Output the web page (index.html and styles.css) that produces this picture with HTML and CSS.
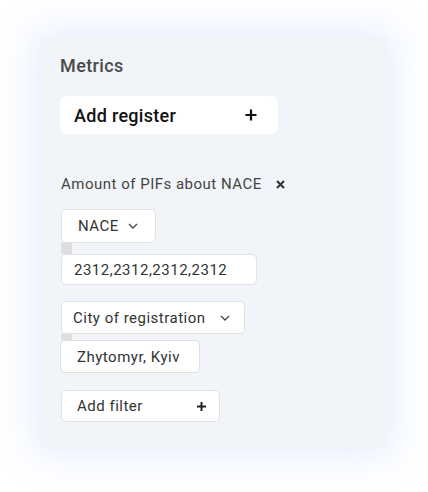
FILE: index.html
```html
<!DOCTYPE html>
<html>
<head>
<meta charset="utf-8">
<link rel="stylesheet" href="styles.css">
</head>
<body>
<div class="panel">
  <div class="title">Metrics</div>
  <button class="add-register">
    <span>Add register</span>
    <svg class="plus-lg" width="12" height="12" viewBox="0 0 12 12"><path d="M6 0.5V11.5M0.5 6H11.5" stroke="#111" stroke-width="2.2"/></svg>
  </button>
  <div class="metric">
    <span>Amount of PIFs about NACE</span>
    <svg class="close" width="9" height="9" viewBox="0 0 9 9"><path d="M1 1L8 8M8 1L1 8" stroke="#333" stroke-width="2"/></svg>
  </div>
  <div class="group">
    <div class="select nace"><span>NACE</span><svg class="chev" width="10" height="6" viewBox="0 0 10 6"><path d="M1 1L5 5L9 1" fill="none" stroke="#444" stroke-width="1.3"/></svg></div>
    <div class="link"></div>
    <div class="value codes">2312,2312,2312,2312</div>
  </div>
  <div class="group">
    <div class="select city"><span>City of registration</span><svg class="chev" width="10" height="6" viewBox="0 0 10 6"><path d="M1 1L5 5L9 1" fill="none" stroke="#444" stroke-width="1.3"/></svg></div>
    <div class="link short"></div>
    <div class="value cities">Zhytomyr, Kyiv</div>
  </div>
  <button class="add-filter">
    <span>Add filter</span>
    <svg width="9" height="9" viewBox="0 0 9 9"><path d="M4.5 0V9M0 4.5H9" stroke="#222" stroke-width="2"/></svg>
  </button>
</div>
</body>
</html>
```
FILE: styles.css
```css
html, body {
  margin: 0;
  padding: 0;
  background: #ffffff;
}
body {
  font-family: Roboto, "Liberation Sans", sans-serif;
  width: 428px;
  height: 492px;
  overflow: hidden;
}
.panel {
  margin: 36px 0 0 40px;
  width: 348px;
  height: 412px;
  box-sizing: border-box;
  padding: 18px 20px 0 20px;
  background: #f1f4f8;
  box-shadow: 0 0 36px 6px rgba(196, 214, 255, 0.45);
  display: flex;
  flex-direction: column;
  align-items: flex-start;
}
.title {
  font-size: 18px;
  line-height: 24px;
  font-weight: 500;
  color: #4a4a4a;
  letter-spacing: 0.4px;
}
button {
  font-family: inherit;
  border: none;
  cursor: pointer;
}
.add-register {
  margin-top: 18px;
  width: 218px;
  height: 38px;
  background: #ffffff;
  border-radius: 7px;
  display: flex;
  align-items: center;
  justify-content: space-between;
  padding: 0 21px 0 14px;
  box-sizing: border-box;
  font-size: 18px;
  font-weight: 500;
  color: #111;
  letter-spacing: 0.3px;
}
.metric {
  margin-top: 40px;
  margin-left: 1px;
  font-size: 15px;
  line-height: 20px;
  color: #444;
  display: flex;
  align-items: center;
  gap: 14px;
  letter-spacing: 0.5px;
}
.group {
  margin-top: 15px;
  margin-left: 1px;
  display: flex;
  flex-direction: column;
  align-items: flex-start;
}
.group + .group {
  margin-top: 16px;
}
.select, .value {
  background: #fff;
  border: 1px solid #e2e2e2;
  border-radius: 5px;
  box-sizing: border-box;
  display: flex;
  align-items: center;
  font-size: 15px;
  color: #333;
  letter-spacing: 0.5px;
}
.nace {
  width: 95px;
  height: 34px;
  padding-left: 16px;
  gap: 9px;
}
.city {
  width: 184px;
  height: 33px;
  padding-left: 11px;
  gap: 14px;
}
.link {
  width: 11px;
  height: 11px;
  background: #dedede;
}
.link.short {
  height: 6px;
}
.codes {
  width: 196px;
  height: 31px;
  padding-left: 12px;
}
.cities {
  width: 140px;
  height: 33px;
  padding-left: 16px;
  margin-left: -1px;
  border-color: #e6dcdc;
}
.add-filter {
  margin-top: 17px;
  margin-left: 1px;
  width: 159px;
  height: 32px;
  background: #fff;
  border: 1px solid #e2e2e2;
  border-radius: 5px;
  box-sizing: border-box;
  display: flex;
  align-items: center;
  justify-content: space-between;
  padding: 0 13px 0 15px;
  font-size: 15px;
  color: #333;
  letter-spacing: 0.5px;
}
```
